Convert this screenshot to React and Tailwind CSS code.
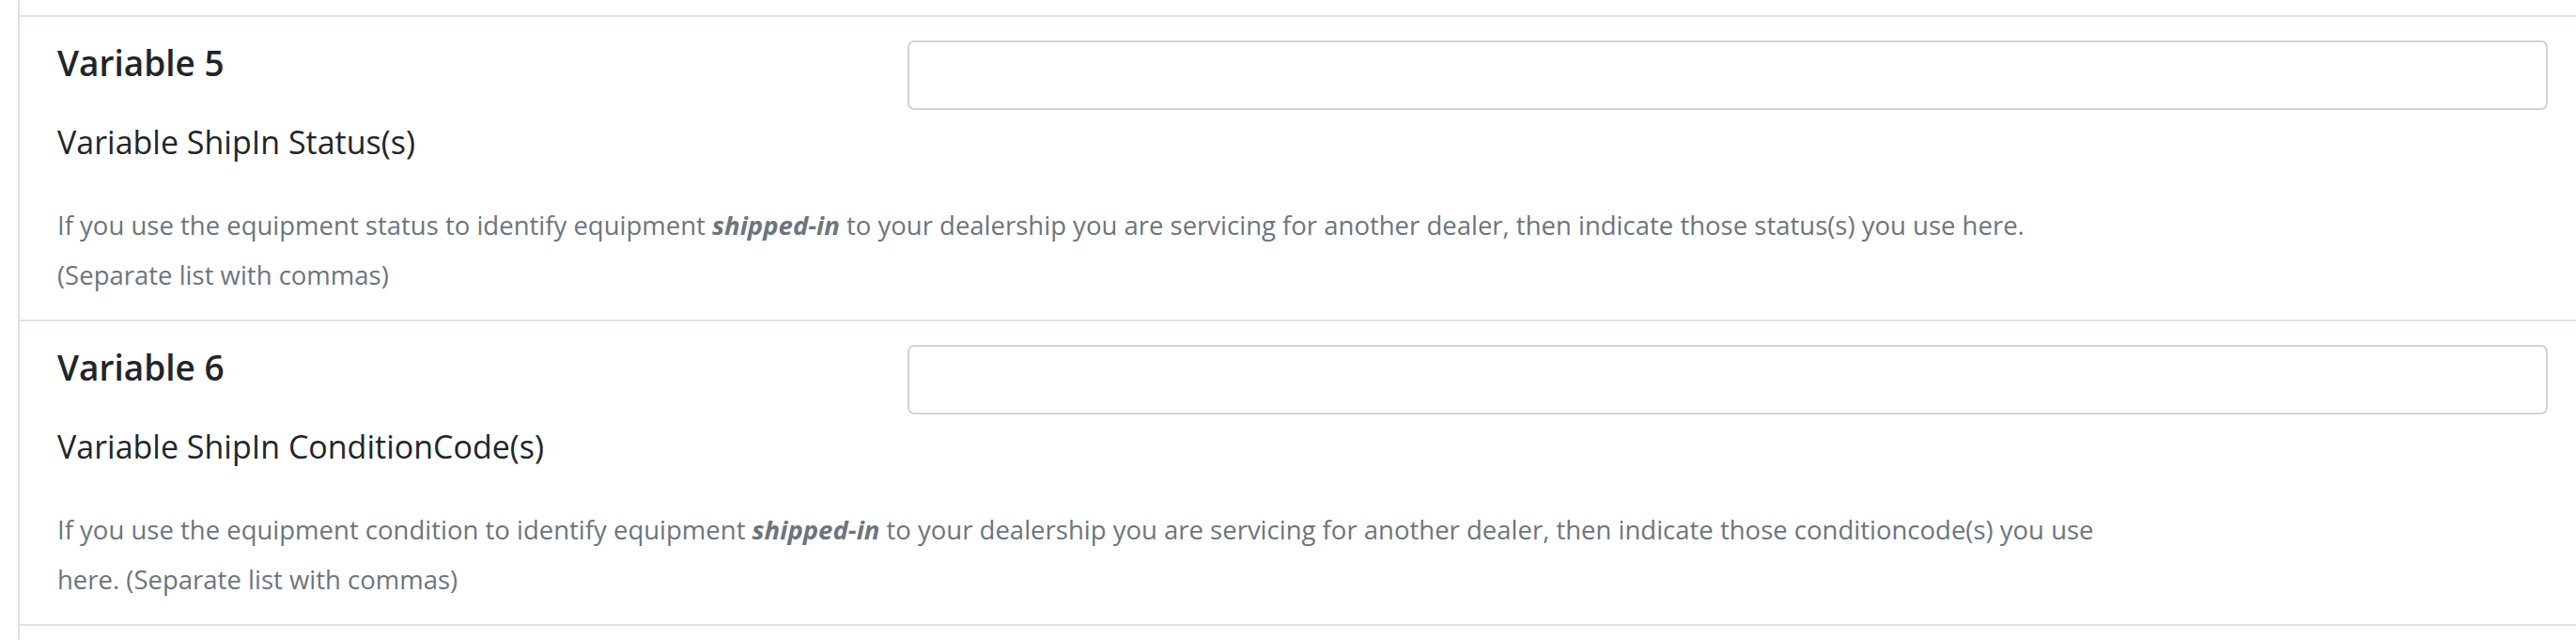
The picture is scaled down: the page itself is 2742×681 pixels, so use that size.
export default function App() {
    const variables = [
        {
            title: "Variable 5",
            label: "Variable ShipIn Status(s)",
            kind: "status",
            tail: "status(s) you use here.",
        },
        {
            title: "Variable 6",
            label: "Variable ShipIn ConditionCode(s)",
            kind: "condition",
            tail: "conditioncode(s) you use here.",
        },
    ];

    return (
        <div className="min-h-screen bg-white font-['Open_Sans',sans-serif]">
            <div className="ml-[19px] min-h-screen border-l-2 border-[#dee2e6]">
                {/* bottom edge of the previous setting */}
                <div className="h-[18px] border-b-2 border-[#dee2e6]" />

                {variables.map((v) => (
                    <div key={v.title} className="border-b-2 border-[#dee2e6] pl-[40px] pb-[21px]">
                        <div className="flex items-start">
                            <div className="w-[905px] shrink-0">
                                <h5 className="mt-[26px] text-[37px] leading-[46px] font-semibold text-[#212529]">
                                    {v.title}
                                </h5>
                                <label className="mt-[41px] block text-[34px] leading-[40px] text-[#212529]">
                                    {v.label}
                                </label>
                            </div>
                            <input
                                type="text"
                                className="mt-[25px] h-[74px] w-[1746px] rounded-[7px] border-2 border-[#ced4da] bg-white px-4 text-[28px] outline-none"
                            />
                        </div>
                        <p className="mt-[42px] w-[2190px] text-[27.5px] leading-[53px] text-[#6c757d]">
                            If you use the equipment {v.kind} to identify equipment{" "}
                            <b className="font-bold italic">shipped-in</b> to your dealership you are servicing
                            for another dealer, then indicate those {v.tail} (Separate list with commas)
                        </p>
                    </div>
                ))}
            </div>
        </div>
    );
}
